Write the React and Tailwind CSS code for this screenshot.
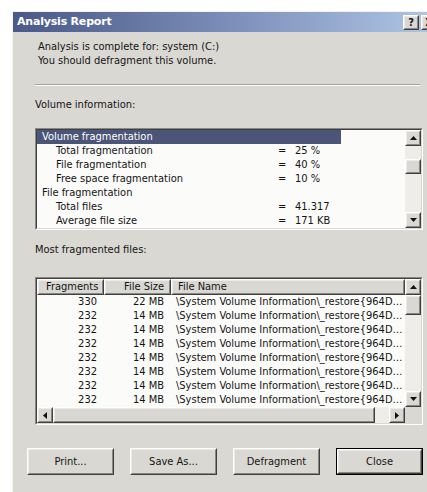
import React from 'react';

const ui = "font-['DejaVu_Sans_Condensed','DejaVu_Sans',sans-serif]";

const volumeRows = [
  { label: 'Volume fragmentation', head: true, selected: true },
  { label: 'Total fragmentation', value: '25 %' },
  { label: 'File fragmentation', value: '40 %' },
  { label: 'Free space fragmentation', value: '10 %' },
  { label: 'File fragmentation', head: true },
  { label: 'Total files', value: '41.317' },
  { label: 'Average file size', value: '171 KB' },
];

const files = [
  { frags: 330, size: '22 MB' },
  ...Array.from({ length: 7 }, () => ({ frags: 232, size: '14 MB' })),
];

const Arrow = ({ dir }) => {
  const vertical = dir === 'up' || dir === 'down';
  const pts = {
    up: '0,4 3.5,0 7,4',
    down: '0,0 3.5,4 7,0',
    left: '4,0 0,3.5 4,7',
    right: '0,0 4,3.5 0,7',
  }[dir];
  return (
    <svg width={vertical ? 7 : 4} height={vertical ? 4 : 7} viewBox={vertical ? '0 0 7 4' : '0 0 4 7'}>
      <polygon points={pts} fill="#111" />
    </svg>
  );
};

// classic 3d raised box
const Raised = ({ className = '', children }) => (
  <div className={`border border-t-white border-l-white border-r-[#404040] border-b-[#404040] bg-[#dad8d3] ${className}`}>
    <div className="flex h-full w-full items-center justify-center border border-t-[#eceae5] border-l-[#eceae5] border-r-[#8a8883] border-b-[#8a8883]">
      {children}
    </div>
  </div>
);

const Sunken = ({ className = '', children }) => (
  <div className={`border border-t-[#8a8883] border-l-[#8a8883] border-r-white border-b-white ${className}`}>
    <div className="flex h-full w-full border border-t-[#404040] border-l-[#404040] border-r-[#dad8d3] border-b-[#dad8d3] bg-[#fbfbfa]">
      {children}
    </div>
  </div>
);

const VScroll = ({ thumbTop, thumbH }) => (
  <div className="flex w-4 shrink-0 flex-col bg-[#eeede9]">
    <Raised className="h-4 w-4 shrink-0"><Arrow dir="up" /></Raised>
    <div className="relative flex-1">
      <div className="absolute left-0 w-4" style={{ top: thumbTop, height: thumbH }}>
        <Raised className="h-full w-full" />
      </div>
    </div>
    <Raised className="h-4 w-4 shrink-0"><Arrow dir="down" /></Raised>
  </div>
);

const Button = ({ label, primary }) => (
  <div className={`h-[27px] w-[87px] ${primary ? 'border border-black' : ''}`}>
    <Raised className="h-full w-full">
      <span>{label}</span>
    </Raised>
  </div>
);

export default function App() {
  return (
    <div className={`h-screen overflow-hidden bg-white pl-3 pt-[11px] text-[11px] text-[#141414] ${ui}`}>
      <div className="w-[440px] border-l border-t border-[#f4f3ef] bg-[#dad8d3]">
        {/* title bar */}
        <div className="flex h-5 items-center bg-gradient-to-r from-[#4a5987] via-[#7c8fba] to-[#b4cbe8] pl-[4px]">
          <span className="font-['DejaVu_Sans',sans-serif] text-[11px] font-bold tracking-[-0.2px] text-white">
            Analysis Report
          </span>
          <div className="ml-auto flex gap-[2px] pr-[4px]">
            <Raised className="h-[15px] w-4"><span className="text-[11px] font-bold leading-none">?</span></Raised>
            <Raised className="h-[15px] w-4"><span className="text-[11px] font-bold leading-none">X</span></Raised>
            <div className="w-[9px]" />
          </div>
        </div>

        <div className="pl-[22px] pt-2 leading-[14px]">
          <div className="pl-[3px]">
            <div>Analysis is complete for: system (C:)</div>
            <div>You should defragment this volume.</div>
          </div>

          <div className="mt-4 w-[385px] border-b border-t border-b-white border-t-[#a3a19c]" />

          <div className="mt-3 h-[14px]">Volume information:</div>

          {/* volume information list */}
          <Sunken className="mt-4 h-[102px] w-[388px]">
            <div className="flex-1 overflow-hidden">
              {volumeRows.map((r, i) => (
                <div key={i} className="flex h-[14px] items-center whitespace-nowrap">
                  <div
                    className={`flex h-full w-[304px] items-center ${r.head ? 'pl-[5px]' : 'pl-[19px]'} ${
                      r.selected ? 'bg-[#4b5578] text-white' : ''
                    }`}
                  >
                    {r.label}
                  </div>
                  {r.value && (
                    <>
                      <span className="-ml-[63px] w-[17px]">=</span>
                      <span>{r.value}</span>
                    </>
                  )}
                </div>
              ))}
            </div>
            <VScroll thumbTop={13} thumbH={15} />
          </Sunken>

          <div className="mt-[13px] h-[14px]">Most fragmented files:</div>

          {/* most fragmented files list */}
          <Sunken className="mt-5 h-[148px] w-[388px]">
            <div className="flex flex-1 flex-col">
              <div className="flex flex-1">
                <div className="flex-1 overflow-hidden">
                  <div className="flex h-4">
                    <Raised className="h-4 w-[67px] shrink-0">
                      <span className="w-full pl-[7px] text-left">Fragments</span>
                    </Raised>
                    <Raised className="h-4 w-[67px] shrink-0">
                      <span className="w-full pr-[5px] text-right">File Size</span>
                    </Raised>
                    <Raised className="h-4 flex-1">
                      <span className="w-full pl-[5px] text-left">File Name</span>
                    </Raised>
                  </div>
                  {files.map((f, i) => (
                    <div key={i} className="flex h-[14px] items-center whitespace-nowrap">
                      <span className="w-[60px] text-right">{f.frags}</span>
                      <span className="w-[67px] text-right">{f.size}</span>
                      <span className="pl-[12px]">\System Volume Information\_restore{'{'}964D…</span>
                    </div>
                  ))}
                </div>
                <VScroll thumbTop={0} thumbH={20} />
              </div>
              <div className="flex h-4">
                <div className="flex flex-1 bg-[#eeede9]">
                  <Raised className="h-4 w-4 shrink-0"><Arrow dir="left" /></Raised>
                  <Raised className="h-4 w-[322px]" />
                  <div className="flex-1" />
                  <Raised className="h-4 w-4 shrink-0"><Arrow dir="right" /></Raised>
                </div>
                <div className="w-4 bg-[#dad8d3]" />
              </div>
            </div>
          </Sunken>

          <div className="mt-[23px] -ml-[8px] flex gap-4">
            <Button label="Print..." />
            <Button label="Save As..." />
            <Button label="Defragment" />
            <Button label="Close" primary />
          </div>
          <div className="h-10" />
        </div>
      </div>
    </div>
  );
}
